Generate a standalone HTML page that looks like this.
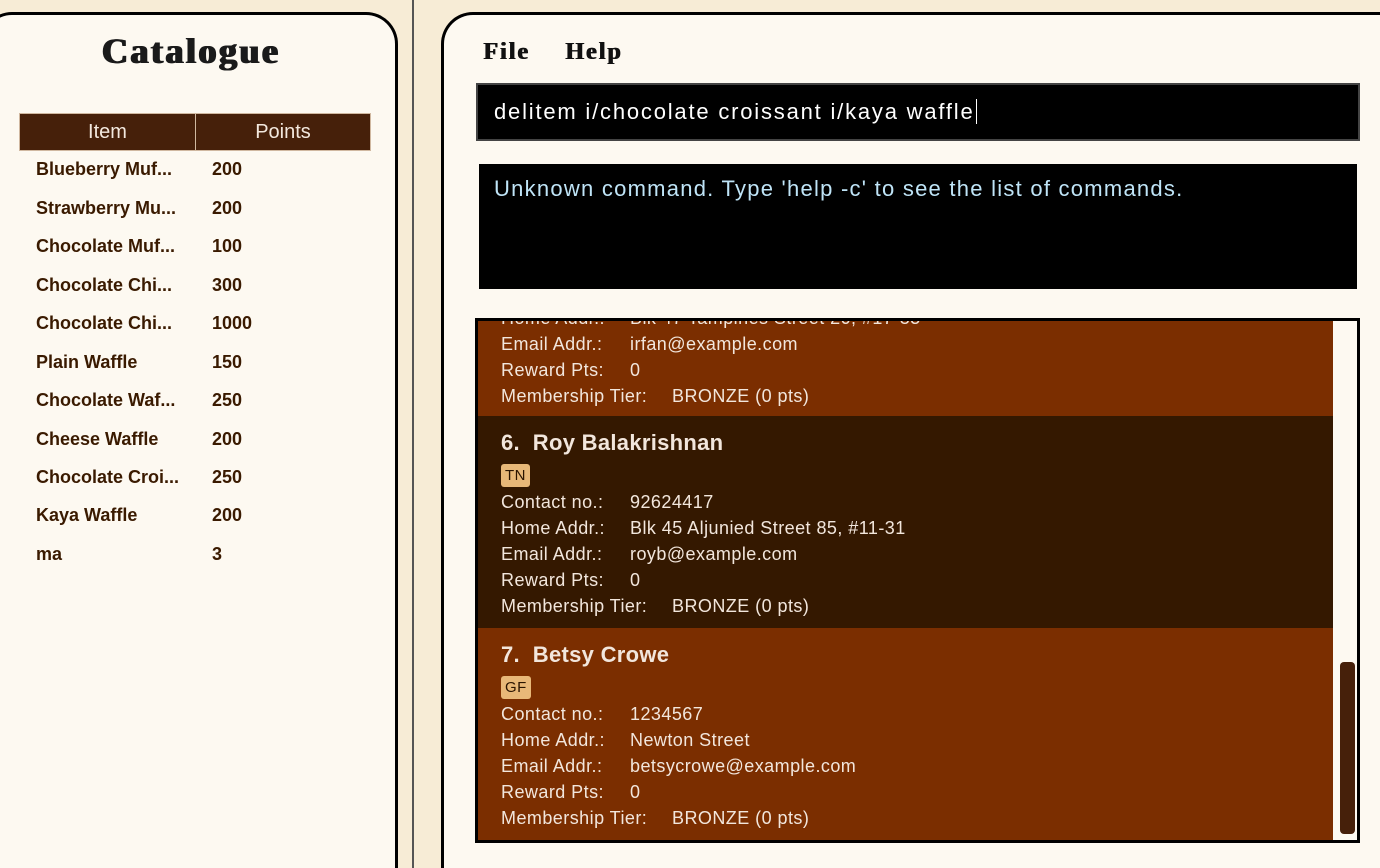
<!DOCTYPE html>
<html><head><meta charset="utf-8"><style>
*{margin:0;padding:0;box-sizing:border-box}
html,body{width:1380px;height:868px;overflow:hidden}
body{background:#f7ecd6;font-family:"Liberation Sans",sans-serif;position:relative}
.lp{position:absolute;left:-20px;top:12px;width:418px;height:856px;border:3px solid #000;border-bottom:none;border-radius:32px 32px 0 0;background:#fdf9f1}
.div{position:absolute;left:412px;top:0;width:2px;height:868px;background:#555}
.rp{position:absolute;left:441px;top:12px;width:939px;height:856px;border:3px solid #000;border-bottom:none;border-right:none;border-radius:32px 0 0 0;background:#fdf9f1}
.title{position:absolute;left:101px;top:30px;font:900 36px "Liberation Serif",serif;color:#1a1a1a;letter-spacing:2.5px;text-shadow:1px 0 0 #1a1a1a,2px 0 0 #1a1a1a}
table{position:absolute;left:19px;top:113px;width:352px;border-collapse:collapse}
th{background:#46200a;color:#f3e8de;font:400 20px "Liberation Sans",sans-serif;height:37px;border:1px solid #d0b8a0}
.row{position:absolute;left:36px;font:700 18px "Liberation Sans",sans-serif;color:#3a1a00}
.row span{position:absolute;left:176px}
.menu{position:absolute;top:39px;font:900 24px "Liberation Serif",serif;color:#111;letter-spacing:2px;text-shadow:1px 0 0 #111}
.cmd{position:absolute;left:476px;top:83px;width:884px;height:58px;background:#000;border:2px solid #444;color:#fff;font:22px "Liberation Sans",sans-serif;padding:14px 16px;letter-spacing:1.8px;white-space:nowrap}
.res{position:absolute;left:479px;top:164px;width:878px;height:125px;background:#000;color:#bfe4f7;font:22px "Liberation Sans",sans-serif;padding:12px 15px;letter-spacing:1.25px;white-space:nowrap}
.list{position:absolute;left:475px;top:318px;width:885px;height:525px;border:3px solid #000;overflow:hidden;background:#fdf9f1}
.card{position:absolute;left:0;width:855px;color:#f2e6dc;font:18px "Liberation Sans",sans-serif;letter-spacing:0.45px}
.f{position:absolute;left:23px;height:26px;white-space:nowrap}
.f b{font-weight:400;position:absolute;left:129px;white-space:nowrap}
.name{position:absolute;left:23px;font:700 22px "Liberation Sans",sans-serif;letter-spacing:0.3px}
.tag{position:absolute;left:23px;background:#e8b878;color:#2a1400;font:15px "Liberation Sans",sans-serif;padding:3px 4px;border-radius:3px}
.sb{position:absolute;left:862px;top:341px;width:15px;height:172px;background:#46200a;border-radius:4px}
</style></head><body>
<div class="lp"></div><div class="div"></div><div class="rp"></div>
<div class="title">Catalogue</div>
<table><tr><th style="width:176px">Item</th><th>Points</th></tr></table>
<div class="row" style="top:159px">Blueberry Muf...<span>200</span></div>
<div class="row" style="top:198px">Strawberry Mu...<span>200</span></div>
<div class="row" style="top:236px">Chocolate Muf...<span>100</span></div>
<div class="row" style="top:275px">Chocolate Chi...<span>300</span></div>
<div class="row" style="top:313px">Chocolate Chi...<span>1000</span></div>
<div class="row" style="top:352px">Plain Waffle<span>150</span></div>
<div class="row" style="top:390px">Chocolate Waf...<span>250</span></div>
<div class="row" style="top:429px">Cheese Waffle<span>200</span></div>
<div class="row" style="top:467px">Chocolate Croi...<span>250</span></div>
<div class="row" style="top:505px">Kaya Waffle<span>200</span></div>
<div class="row" style="top:544px">ma<span>3</span></div>
<div class="menu" style="left:483px">File</div>
<div class="menu" style="left:565px">Help</div>
<div class="cmd">delitem i/chocolate croissant i/kaya waffle<span style="border-left:1px solid #fff;margin-left:1px"></span></div>
<div class="res">Unknown command. Type 'help -c' to see the list of commands.</div>
<div class="list">
 <div class="card" style="top:-13px;height:111px;background:#7b2e00">
  <div class="f" style="top:0">Home Addr.:<b>Blk 47 Tampines Street 20, #17-35</b></div>
  <div class="f" style="top:26px">Email Addr.:<b>irfan@example.com</b></div>
  <div class="f" style="top:52px">Reward Pts:<b>0</b></div>
  <div class="f" style="top:78px">Membership Tier:<b style="left:171px">BRONZE (0 pts)</b></div>
 </div>
 <div class="card" style="top:95px;height:212px;background:#341800">
  <div class="name" style="top:14px">6.&nbsp; Roy Balakrishnan</div>
  <div class="tag" style="top:48px">TN</div>
  <div class="f" style="top:76px">Contact no.:<b>92624417</b></div>
  <div class="f" style="top:102px">Home Addr.:<b>Blk 45 Aljunied Street 85, #11-31</b></div>
  <div class="f" style="top:128px">Email Addr.:<b>royb@example.com</b></div>
  <div class="f" style="top:154px">Reward Pts:<b>0</b></div>
  <div class="f" style="top:180px">Membership Tier:<b style="left:171px">BRONZE (0 pts)</b></div>
 </div>
 <div class="card" style="top:307px;height:220px;background:#7b2e00">
  <div class="name" style="top:14px">7.&nbsp; Betsy Crowe</div>
  <div class="tag" style="top:48px">GF</div>
  <div class="f" style="top:76px">Contact no.:<b>1234567</b></div>
  <div class="f" style="top:102px">Home Addr.:<b>Newton Street</b></div>
  <div class="f" style="top:128px">Email Addr.:<b>betsycrowe@example.com</b></div>
  <div class="f" style="top:154px">Reward Pts:<b>0</b></div>
  <div class="f" style="top:180px">Membership Tier:<b style="left:171px">BRONZE (0 pts)</b></div>
 </div>
 <div class="sb"></div>
</div>
</body></html>
